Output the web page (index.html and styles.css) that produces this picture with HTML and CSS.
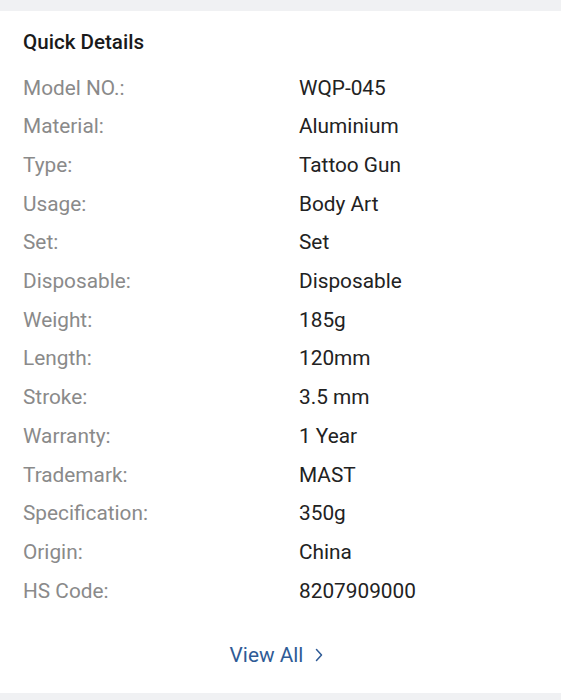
FILE: index.html
```html
<!DOCTYPE html>
<html>
<head>
<meta charset="utf-8">
<link rel="stylesheet" href="styles.css">
</head>
<body>
<div class="page">
  <section class="card">
    <h2 class="title">Quick Details</h2>
    <dl class="details">
      <dt>Model NO.:</dt><dd>WQP-045</dd>
      <dt>Material:</dt><dd>Aluminium</dd>
      <dt>Type:</dt><dd>Tattoo Gun</dd>
      <dt>Usage:</dt><dd>Body Art</dd>
      <dt>Set:</dt><dd>Set</dd>
      <dt>Disposable:</dt><dd>Disposable</dd>
      <dt>Weight:</dt><dd>185g</dd>
      <dt>Length:</dt><dd>120mm</dd>
      <dt>Stroke:</dt><dd>3.5 mm</dd>
      <dt>Warranty:</dt><dd>1 Year</dd>
      <dt>Trademark:</dt><dd>MAST</dd>
      <dt>Specification:</dt><dd>350g</dd>
      <dt>Origin:</dt><dd>China</dd>
      <dt>HS Code:</dt><dd>8207909000</dd>
    </dl>
    <div class="more">
      <a class="view-all" href="#">View All
        <svg class="chev" width="10" height="14" viewBox="0 0 10 14"><path d="M2.5 1.5 L7.5 7 L2.5 12.5" fill="none" stroke="currentColor" stroke-width="1.5" stroke-linecap="round" stroke-linejoin="round"/></svg>
      </a>
    </div>
  </section>
</div>
</body>
</html>
```
FILE: styles.css
```css
html, body {
  margin: 0;
  padding: 0;
  background: #f0f1f3;
}
body {
  font-family: Roboto, "Noto Sans", sans-serif;
  height: 700px;
  overflow: hidden;
}
.page {
  padding-top: 11px;
}
.card {
  background: #ffffff;
  padding: 18px 23px 18px 23px;
}
.title {
  margin: 0;
  font-size: 20.6px;
  line-height: 26px;
  font-weight: 500;
  color: #1a1a1a;
}
.details {
  margin: 13.65px 0 0 0;
  display: grid;
  grid-template-columns: 276px 1fr;
  grid-auto-rows: 38.7px;
  align-items: center;
  font-size: 20.8px;
}
.details dt {
  margin: 0;
  color: #8a8a8a;
  line-height: 38.7px;
}
.details dd {
  margin: 0;
  color: #222222;
  line-height: 38.7px;
}
.more {
  margin-top: 24.5px;
  display: flex;
  justify-content: center;
}
.view-all {
  display: flex;
  align-items: center;
  gap: 11px;
  margin-right: 7px;
  color: #2f5b96;
  text-decoration: none;
  font-size: 20.8px;
  line-height: 40px;
}
.chev {
  display: block;
}
```
